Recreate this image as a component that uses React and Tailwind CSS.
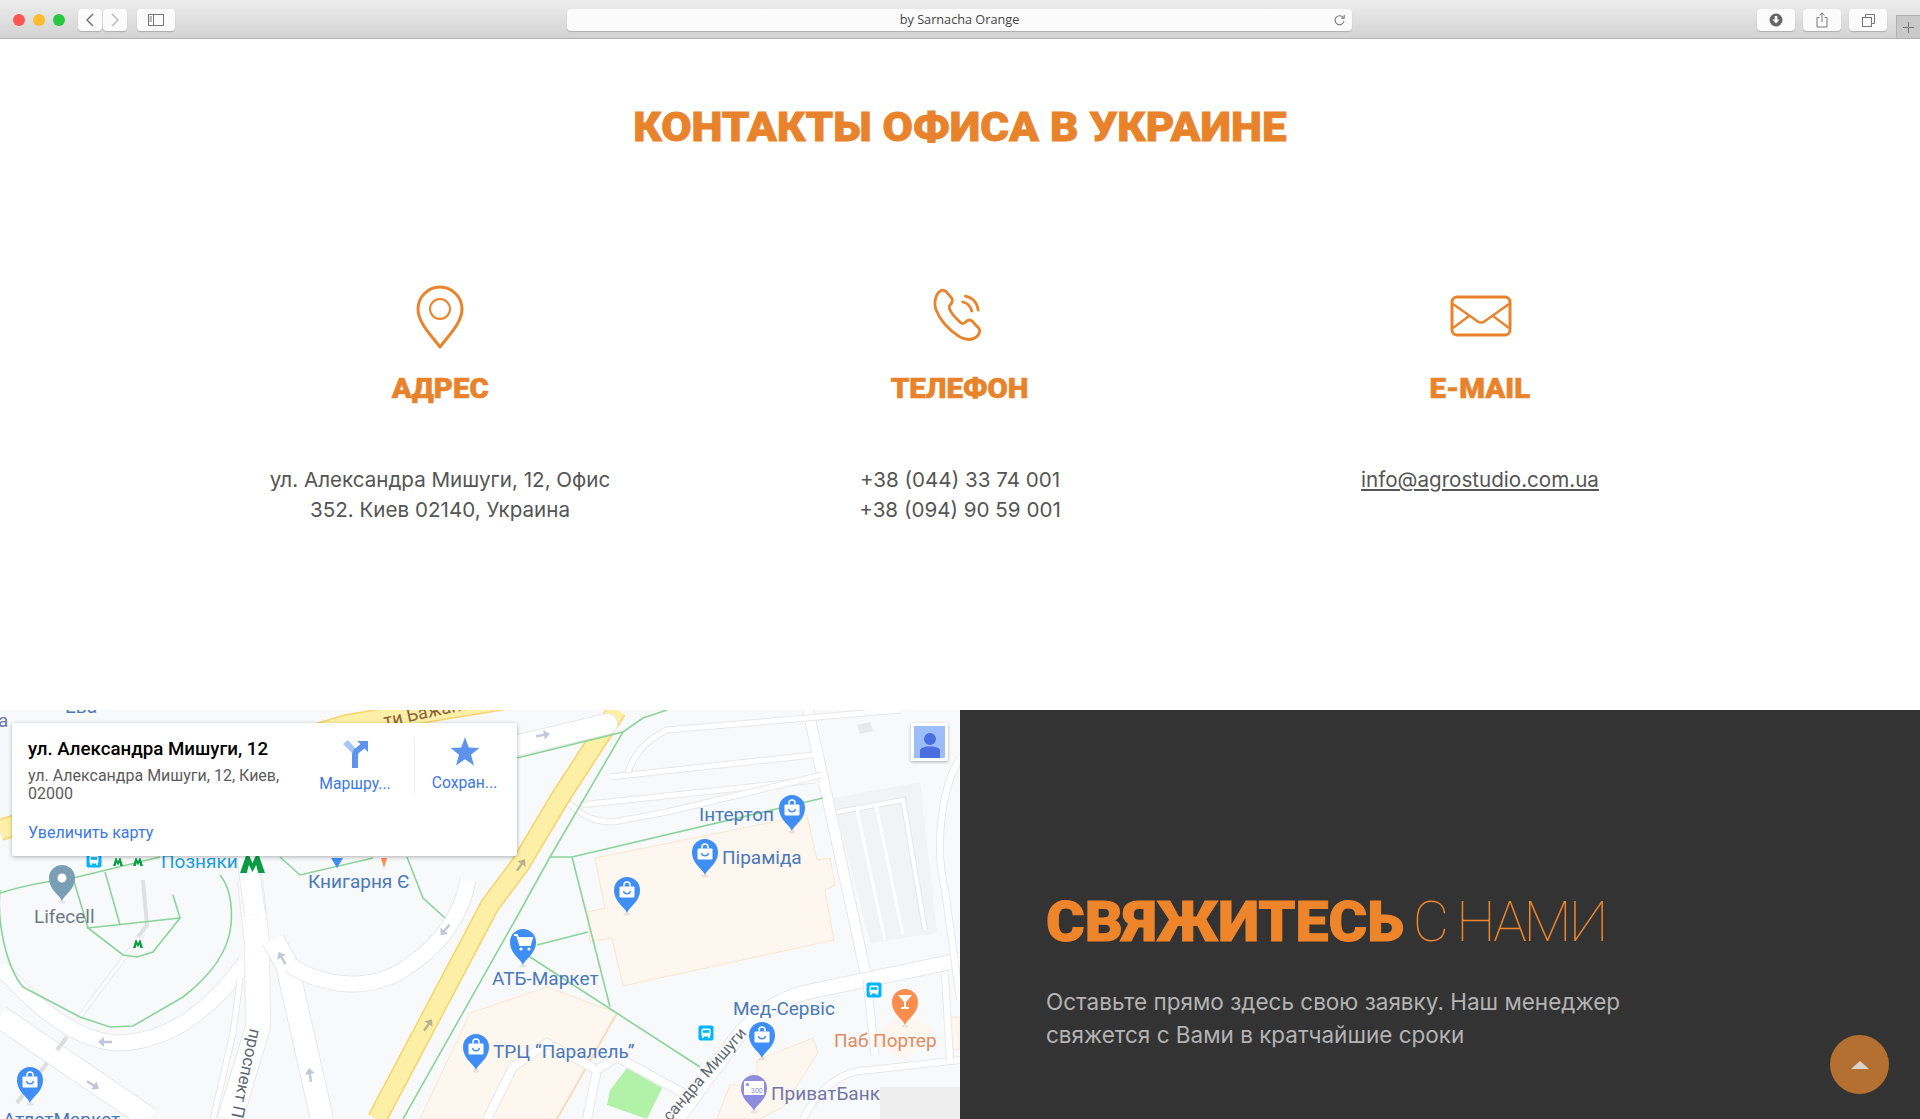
import React from 'react';

const ORANGE = '#e9832b';

const Road = ({ d, w = 14, cap = 'butt' }) => (
  <>
    <path d={d} fill="none" stroke="#e8e8e8" strokeWidth={w + 2} strokeLinejoin="round" strokeLinecap={cap} />
    <path d={d} fill="none" stroke="#ffffff" strokeWidth={w} strokeLinejoin="round" strokeLinecap={cap} />
  </>
);

const roads = [
  { d: 'M0 967 C30 1000 70 1040 117 1043 C170 1042 210 1010 245 963', w: 15 },
  { d: 'M250 880 L257 943 L258 1027 L230 1119', w: 24 },
  { d: 'M273 940 L287 965 L322 1119', w: 22 },
  { d: 'M290 965 C320 985 370 995 410 965 C440 945 462 915 468 880', w: 15 },
  { d: 'M0 1017 L150 1119', w: 22 },
  { d: 'M77 1020 L143 933', w: 3 },
  { d: 'M240 980 L233 1033 L213 1119', w: 5 },
  { d: 'M247 855 L255 915', w: 20 },
  { d: 'M808 710 L853 915 L867 980', w: 10 },
  { d: 'M960 960 L803 993 C770 1003 750 1020 735 1040 L677 1119', w: 14 },
  { d: 'M610 777 L813 755', w: 5 },
  { d: 'M580 805 L815 780', w: 5 },
  { d: 'M560 793 C575 812 590 822 613 822 L667 812 L822 775', w: 5 },
  { d: 'M628 772 C635 752 650 738 667 730 L900 710', w: 5 },
  { d: 'M960 758 C940 790 935 850 945 890 L960 1000', w: 6 },
  { d: 'M513 1067 L487 1119', w: 8 },
  { d: 'M513 1067 L547 1043 L597 1070 L587 1119', w: 8 },
  { d: 'M597 1070 L617 1057 L683 1093', w: 8 },
  { d: 'M803 1119 C820 1085 845 1070 870 1070 L960 1060', w: 6 },
  { d: 'M867 980 L875 1055', w: 7 },
  { d: 'M945 975 L950 1060', w: 6 },
];

const greens = [
  'M517 758 L623 732 L643 718 L667 710',
  'M623 732 L550 857 L518 915 L403 1119',
  'M550 857 L572 857 L823 798',
  'M572 857 L610 1007',
  'M537 945 L588 932',
  'M527 955 L700 1067',
  'M0 893 C25 885 45 882 73 878 L160 857',
  'M280 857 L300 875 L373 858',
  'M407 857 L423 898 L445 918',
  'M0 890 C-3 920 5 965 23 987 L80 1017 L110 1027 L133 1026 L183 997 C205 980 228 955 231 925 C233 900 228 885 220 875',
  'M88 928 L180 918 L153 952 L137 957 L123 955 Z',
  'M113 900 L120 925',
  'M173 895 L180 918',
  'M73 878 L88 928',
  'M105 872 L113 900',
];

const labels = [
  { t: 'Інтертоп', x: 699, y: 821, c: '#4a78b8' },
  { t: 'Піраміда', x: 722, y: 864, c: '#4a78b8' },
  { t: 'АТБ-Маркет', x: 492, y: 985, c: '#4a78b8' },
  { t: 'ТРЦ “Паралель”', x: 493, y: 1058, c: '#4a78b8' },
  { t: 'Мед-Сервіс', x: 733, y: 1015, c: '#4a78b8' },
  { t: 'Паб Портер', x: 834, y: 1047, c: '#e08a62' },
  { t: 'ПриватБанк', x: 771, y: 1100, c: '#7175a8' },
  { t: 'Книгарня Є', x: 308, y: 888, c: '#4a78b8' },
  { t: 'Позняки', x: 161, y: 868, c: '#1a9ddc' },
  { t: 'Lifecell', x: 34, y: 923, c: '#6f7a82' },
  { t: 'АтлетМаркет', x: 3, y: 1126, c: '#4a78b8' },
  { t: 'Ева', x: 65, y: 713, c: '#4a78b8' },
  { t: 'а', x: -2, y: 727, c: '#7175a8' },
];

const PinHead = ({ x, y, color, children }) => (
  <g transform={`translate(${x} ${y})`}>
    <ellipse cx="0" cy="24" rx="3.5" ry="1.5" fill="#000" opacity="0.08" />
    <path d="M0 23 C-2 17 -13 12 -13 0 A13 13 0 0 1 13 0 C13 12 2 17 0 23 Z" fill={color} />
    {children}
  </g>
);

const Bag = () => (
  <>
    <rect x="-7.5" y="-3.5" width="15" height="11" rx="1" fill="#fff" />
    <path d="M-3 -3.5 V-5 A3 3 0 0 1 3 -5 V-3.5" fill="none" stroke="#fff" strokeWidth="1.5" />
    <path d="M-3.5 1 A3.6 3.6 0 0 0 3.5 1" fill="none" stroke="#3f8ef5" strokeWidth="1.3" />
  </>
);

const Cart = () => (
  <>
    <path d="M-9 -7 H-6 L-3 3 H7 L9 -4 H-5" fill="none" stroke="#fff" strokeWidth="1.8" />
    <path d="M-4.5 -4 H8.5 L6.5 2.5 H-3 Z" fill="#fff" />
    <circle cx="-2" cy="7" r="1.6" fill="#fff" />
    <circle cx="6" cy="7" r="1.6" fill="#fff" />
  </>
);

const bagPins = [[792, 808], [705, 852], [627, 890], [476, 1047], [762, 1035], [30, 1080]];

const MapArrow = ({ x, y, r, c = '#c3c6da' }) => (
  <path
    transform={`translate(${x} ${y}) rotate(${r})`}
    d="M-1.2 7 V-1 H-5 L0 -7 L5 -1 H1.2 V7 Z"
    fill={c}
  />
);

const arrows = [
  [105, 1042, -90], [93, 1085, 122], [310, 1075, -8],
  [282, 958, -30], [445, 930, -140],
];

const Metro = ({ x, y, w, h }) => (
  <path
    transform={`translate(${x} ${y}) scale(${w / 24} ${h / 18})`}
    d="M0 18 L6 0 H8.5 L12 8 L15.5 0 H18 L24 18 H17.5 L15.5 10 L12 17 L8.5 10 L6.5 18 Z"
    fill="#0a9d45"
  />
);

const BusStop = ({ x, y }) => (
  <g transform={`translate(${x} ${y})`}>
    <rect x="-7.5" y="-7.5" width="15" height="15" rx="2" fill="#00b6ff" />
    <rect x="-4.5" y="-4.5" width="9" height="8" rx="1.5" fill="#fff" />
    <rect x="-3.2" y="-2.8" width="6.4" height="2.6" fill="#00b6ff" />
    <rect x="-4" y="3.4" width="2" height="1.5" fill="#fff" />
    <rect x="2" y="3.4" width="2" height="1.5" fill="#fff" />
  </g>
);

const MapDrawing = () => (
  <svg viewBox="0 710 960 409" className="absolute inset-0 w-full h-full bg-[#f8f9fb]" style={{ fontFamily: 'Roboto, sans-serif' }}>
    {/* parking + buildings */}
    <polygon points="833,798 920,782 937,933 870,943" fill="#f1f3f4" />
    <polygon points="857,725 870,722 873,731 860,734" fill="#e8eaea" />
    <polygon
      points="595,858 807,815 817,860 830,858 835,885 825,890 834,940 623,986 612,938 590,942 588,912 605,908"
      fill="#fef7ef"
      stroke="#fbe6cf"
    />
    <polygon points="470,1013 547,987 617,1013 557,1119 420,1119" fill="#fef7ef" stroke="#fbe6cf" />
    <path d="M617 1013 L557 1119" stroke="#f8dcbc" strokeWidth="2" fill="none" />
    <polygon points="757,1060 813,1038 818,1053 783,1107 760,1119 717,1119 730,1085 757,1085" fill="#fef7ef" stroke="#fbe6cf" />
    <polygon points="880,1030 905,1012 935,1030 905,1060 878,1045" fill="#fef7ef" />
    <polygon points="950,1017 960,1017 960,1050 950,1050" fill="#fef7ef" stroke="#fbe6cf" />
    <rect x="880" y="1087" width="80" height="32" fill="#eeeeee" />
    <polygon points="627,1068 662,1088 647,1119 607,1105 610,1090" fill="#b1f2a8" />

    {roads.map((r, i) => <Road key={i} {...r} />)}
    <path d="M837 812 L903 800 L925 930" fill="none" stroke="#e6e6e6" strokeWidth="6" />
    <path d="M837 812 L903 800 L925 930" fill="none" stroke="#fff" strokeWidth="4" />
    <path d="M857 810 L885 940 M876 805 L903 935" fill="none" stroke="#fff" strokeWidth="3" />
    <path d="M67 1037 L57 1050 M47 1063 L17 1103" stroke="#dcdede" strokeWidth="4" fill="none" />
    <path d="M143 880 L147 925 L138 937" stroke="#dfe0e0" strokeWidth="4" fill="none" />

    {/* yellow highways */}
    <path d="M377 1119 L490 905 L520 865 L560 798 L617 710" fill="none" stroke="#f8d26b" strokeWidth="20" />
    <path d="M377 1119 L490 905 L520 865 L560 798 L617 710" fill="none" stroke="#fdf0a6" strokeWidth="17" />
    <path d="M0 830 L347 725 L530 695" fill="none" stroke="#f8d26b" strokeWidth="22" />
    <path d="M0 830 L347 725 L530 695" fill="none" stroke="#fdf0a6" strokeWidth="19" />
    <text x="0" y="0" fontSize="18" fill="#8d5f3c" transform="translate(385 727) rotate(-12)">ти Бажана</text>
    <Road d="M430 766 L607 724" w={20} cap="round" />
    <MapArrow x={543} y={735} r={80} />

    {greens.map((d, i) => <path key={i} d={d} fill="none" stroke="#8ad49a" strokeWidth="1.6" />)}

    {arrows.map(([x, y, r], i) => <MapArrow key={i} x={x} y={y} r={r} />)}
    <MapArrow x={521} y={865} r={35} c="#b8b38e" />
    <MapArrow x={428} y={1025} r={35} c="#b8b38e" />

    <text x="0" y="0" fontSize="17" fill="#5d6a72" transform="translate(250 1028) rotate(102)">проспект П</text>
    <text x="0" y="0" fontSize="16" fill="#5d6a72" transform="translate(670 1122) rotate(-49)">сандра Мишуги</text>

    {bagPins.map(([x, y], i) => (
      <PinHead key={i} x={x} y={y} color="#3f8ef5"><Bag /></PinHead>
    ))}
    <PinHead x={523} y={942} color="#3f8ef5"><Cart /></PinHead>
    <PinHead x={754} y={1088} color="#8e8cdd">
      <rect x="-10" y="-7" width="20" height="14" rx="1" fill="#fff" />
      <circle cx="-6.5" cy="-3.5" r="1.6" fill="#8e8cdd" />
      <text x="-3" y="5" fontSize="7" fill="#8e8cdd">300</text>
    </PinHead>
    <PinHead x={905} y={1002} color="#fb8e4d">
      <path d="M-7 -7 H7 L1 0 V5 H4 V7 H-4 V5 H-1 V0 Z" fill="#fff" />
    </PinHead>
    <PinHead x={62} y={878} color="#7a9fb5">
      <circle cx="0" cy="0" r="4.5" fill="#fff" />
    </PinHead>

    <path d="M331 858 H343 L337 868 Z" fill="#3f8ef5" />
    <path d="M381 858 H387 L384 868 Z" fill="#fb8e4d" />

    <Metro x={240} y={855} w={25} h={18} />
    <Metro x={113} y={858} w={10} h={8} />
    <Metro x={133} y={858} w={10} h={8} />
    <Metro x={133} y={940} w={10} h={8} />

    <BusStop x={874} y={990} />
    <BusStop x={706} y={1033} />
    <BusStop x={94} y={860} />

    {labels.map((l) => (
      <text key={l.t} x={l.x} y={l.y} fontSize="19" fill={l.c}>{l.t}</text>
    ))}
  </svg>
);

const PlaceCard = () => (
  <div className="absolute left-3 top-[13px] w-[505px] h-[133px] bg-white rounded-[2px] shadow-[0_1px_4px_rgba(0,0,0,0.3)] pl-4 pt-[15px] flex font-['Roboto',sans-serif]">
    <div className="w-[272px] flex flex-col">
      <div className="text-[18.7px] leading-[22px] font-medium text-black whitespace-nowrap">ул. Александра Мишуги, 12</div>
      <div className="mt-[7px] text-[16px] leading-[18px] text-[#5b5b5b]">ул. Александра Мишуги, 12, Киев, 02000</div>
      <div className="mt-[21px] text-[16px] leading-[18px] text-[#3b78e7] whitespace-nowrap">Увеличить карту</div>
    </div>
    <div className="w-[110px] mr-[4px] flex flex-col items-center pt-[1px] text-[15.7px] text-[#3b78e7]">
      <svg width="30" height="30" viewBox="0 0 30 30">
        <path d="M3 5 L8 1 L17 11 V14 H12 Z" fill="#a6c6f7" />
        <path d="M12 29 V16 C12 12 14 10 17 8 L20.5 5 L17 2 H28 V13 L24.5 9.5 L20 13 C18.5 14.2 18 15 18 17 V29 Z" fill="#5c94ed" />
      </svg>
      <span className="mt-[6px] leading-[18px] whitespace-nowrap">Маршру...</span>
    </div>
    <div className="w-[100px] h-[55px] border-l border-[#eeeeee] flex flex-col items-center text-[15.7px] text-[#3b78e7]">
      <svg width="30" height="30" viewBox="0 0 24 24" className="mt-[-2px]">
        <path d="M12 1 L15 9.2 L23.5 9.6 L16.8 15 L19.2 23.5 L12 18.6 L4.8 23.5 L7.2 15 L0.5 9.6 L9 9.2 Z" fill="#5c94ed" />
      </svg>
      <span className="mt-[8px] leading-[18px] whitespace-nowrap">Сохран...</span>
    </div>
  </div>
);

const ToolbarButton = ({ className, children }) => (
  <div className={`h-[22px] bg-[#fbfbfb] rounded-[4px] shadow-[0_1px_1px_rgba(0,0,0,0.2)] flex items-center justify-center ${className}`}>
    {children}
  </div>
);

const BrowserBar = () => (
  <div className="h-[39px] pt-[2px] bg-gradient-to-b from-[#ededed] to-[#d3d3d3] border-b border-[#b1b1b1] flex items-center relative">
    <div className="flex gap-2 ml-[13px]">
      <span className="w-3 h-3 rounded-full bg-[#fc5753]" />
      <span className="w-3 h-3 rounded-full bg-[#fdbc2e]" />
      <span className="w-3 h-3 rounded-full bg-[#27c83f]" />
    </div>
    <div className="flex gap-px ml-[13px]">
      <ToolbarButton className="w-6">
        <svg width="10" height="14" viewBox="0 0 10 14"><path d="M8 1 L2 7 L8 13" fill="none" stroke="#777" strokeWidth="1.5" /></svg>
      </ToolbarButton>
      <ToolbarButton className="w-6">
        <svg width="10" height="14" viewBox="0 0 10 14"><path d="M2 1 L8 7 L2 13" fill="none" stroke="#bbb" strokeWidth="1.5" /></svg>
      </ToolbarButton>
    </div>
    <ToolbarButton className="w-[38px] ml-[10px]">
      <svg width="16" height="12" viewBox="0 0 16 12">
        <rect x="0.5" y="0.5" width="15" height="11" fill="none" stroke="#777" />
        <path d="M5.5 0.5 V11.5" stroke="#777" />
        <path d="M1.5 3 H4 M1.5 5 H4 M1.5 7 H4" stroke="#777" />
      </svg>
    </ToolbarButton>
    <ToolbarButton className="w-[785px] ml-[392px] relative">
      <span className="text-[12.7px] text-[#444] font-['Open_Sans',sans-serif]">by Sarnacha Orange</span>
      <svg className="absolute right-[6px] top-[5px]" width="13" height="13" viewBox="0 0 13 13">
        <path d="M10.5 4 A4.5 4.5 0 1 0 11 7" fill="none" stroke="#777" strokeWidth="1.1" />
        <path d="M8 4.3 H11.2 V1" fill="none" stroke="#777" strokeWidth="1.1" />
      </svg>
    </ToolbarButton>
    <ToolbarButton className="w-[38px] ml-[405px]">
      <svg width="14" height="14" viewBox="0 0 14 14">
        <circle cx="7" cy="7" r="6.5" fill="#666" />
        <path d="M5.7 3 H8.3 V6.5 H10.5 L7 10.5 L3.5 6.5 H5.7 Z" fill="#fff" />
      </svg>
    </ToolbarButton>
    <ToolbarButton className="w-[38px] ml-2">
      <svg width="12" height="16" viewBox="0 0 12 16">
        <path d="M3.5 5.5 H1 V15 H11 V5.5 H8.5" fill="none" stroke="#777" />
        <path d="M6 10 V1 M3.5 3.2 L6 0.8 L8.5 3.2" fill="none" stroke="#777" />
      </svg>
    </ToolbarButton>
    <ToolbarButton className="w-[38px] ml-2">
      <svg width="13" height="13" viewBox="0 0 13 13">
        <rect x="0.5" y="3.5" width="9" height="9" fill="none" stroke="#777" />
        <path d="M3.5 3.5 V0.5 H12.5 V9.5 H9.5" fill="none" stroke="#777" />
      </svg>
    </ToolbarButton>
    <div className="absolute right-0 bottom-0 w-6 h-[23px] bg-[#c9c9c9] border-l border-t border-[#b1b1b1] flex items-center justify-center">
      <svg width="11" height="11" viewBox="0 0 11 11"><path d="M5.5 0 V11 M0 5.5 H11" stroke="#777" /></svg>
    </div>
  </div>
);

const PinIcon = () => (
  <svg width="50" height="64" viewBox="0 0 50 64" fill="none" stroke={ORANGE}>
    <path d="M25 62 C17 51 3 38 3 24 A22 22 0 0 1 47 24 C47 38 33 51 25 62 Z" strokeWidth="3" strokeLinejoin="round" />
    <circle cx="25" cy="24" r="10" strokeWidth="2" />
  </svg>
);

const PhoneIcon = () => (
  <svg width="60" height="60" viewBox="0 0 56 56" fill="none" stroke={ORANGE} strokeWidth="2.6" strokeLinejoin="round" strokeLinecap="round">
    <path d="M11 3 C14 2.5 15 4 16.5 6 L20 10 C21.5 12 21 14.5 18.5 17 C17 18.5 18 20 19.5 23 C22 27.5 25 30 29 33.5 C31 35 32 34 33.5 32.5 C35.5 30.5 37.5 30 39.5 32 L45.5 38.5 C47 40.5 46.5 43 44 46 C40 50 33 50 27 46 C17 39.5 9 30 5.5 21 C3 13 6 5 11 3 Z" />
    <path d="M33 8.5 C39.5 9.5 44 14.5 45 21.5" />
    <path d="M30.5 14 C35 15 38 18 39 22.5" />
  </svg>
);

const MailIcon = () => (
  <svg width="62" height="42" viewBox="0 0 62 42" fill="none" stroke={ORANGE} strokeWidth="3" strokeLinejoin="round" className="mb-[3px] ml-[2px]">
    <rect x="2" y="2" width="58" height="38" rx="5" />
    <path d="M3 9 L27 26 C29.5 28 32.5 28 35 26 L59 9" strokeWidth="2.4" />
    <path d="M3 33 L19 21 M59 33 L43 21" strokeWidth="2.2" />
  </svg>
);

const contacts = [
  { icon: <PinIcon />, title: 'АДРЕС', lines: ['ул. Александра Мишуги, 12, Офис', '352. Киев 02140, Украина'] },
  { icon: <PhoneIcon />, title: 'ТЕЛЕФОН', lines: ['+38 (044) 33 74 001', '+38 (094) 90 59 001'] },
  { icon: <MailIcon />, title: 'E-MAIL', link: 'info@agrostudio.com.ua' },
];

export default function App() {
  return (
    <div className="relative w-[1920px] h-[1119px] overflow-hidden bg-white font-['Inter',sans-serif]">
      <BrowserBar />

      <section className="h-[671px] pt-[67px] text-center">
        <h2 className="inline-block scale-x-[1.1] text-[40px] leading-[44px] font-black text-[#e9832b] font-['Roboto',sans-serif] [-webkit-text-stroke:0.8px_#e9832b]">
          КОНТАКТЫ ОФИСА В УКРАИНЕ
        </h2>
        <div className="mt-[135px] mx-[180px] grid grid-cols-3">
          {contacts.map((c) => (
            <div key={c.title} className="flex flex-col items-center text-center">
              <div className="h-[64px] flex items-center justify-center">{c.icon}</div>
              <h3 className="mt-[23px] scale-x-[1.05] text-[28px] leading-[34px] font-black text-[#e9832b] font-['Roboto',sans-serif] [-webkit-text-stroke:0.6px_#e9832b]">{c.title}</h3>
              <div className="mt-[59px] text-[20.6px] leading-[30px] text-[#555555]">
                {c.lines && c.lines.map((l) => <div key={l}>{l}</div>)}
                {c.link && <a className="underline">{c.link}</a>}
              </div>
            </div>
          ))}
        </div>
      </section>

      <section className="grid grid-cols-2 h-[409px]">
        <div className="relative overflow-hidden">
          <MapDrawing />
          <PlaceCard />
          <div className="absolute left-[911px] top-[13px] w-[37px] h-[38px] bg-[#9dbdf9] border-[3px] border-white shadow-[0_1px_3px_rgba(0,0,0,0.3)] flex items-end justify-center overflow-hidden">
            <svg width="24" height="28" viewBox="0 0 24 28">
              <circle cx="12" cy="9" r="6" fill="#4a6ee0" />
              <path d="M2 28 V21 C2 18 5 16.5 12 16.5 C19 16.5 22 18 22 21 V28 Z" fill="#4a6ee0" />
            </svg>
          </div>
        </div>
        <div className="bg-[#333333] pl-[86px] pt-[182px]">
          <h2 className="text-[56px] leading-[60px] text-[#ee852b] font-['Roboto',sans-serif] whitespace-nowrap">
            <span className="inline-block origin-left scale-x-[1.054] mr-[27px] font-black [-webkit-text-stroke:1px_#ee852b]">СВЯЖИТЕСЬ</span>
            <span className="font-thin tracking-[-3px]">С НАМИ</span>
          </h2>
          <p className="mt-[33px] text-[22.5px] leading-[33px] text-[#b3b3b3]">
            Оставьте прямо здесь свою заявку. Наш менеджер<br />свяжется с Вами в кратчайшие сроки
          </p>
        </div>
      </section>

      <button className="absolute left-[1830px] top-[1035px] w-[59px] h-[59px] rounded-full bg-[#b37030] flex items-center justify-center">
        <span className="w-0 h-0 border-l-[9px] border-r-[9px] border-b-[8px] border-l-transparent border-r-transparent border-b-[#d9d4cd]" />
      </button>
    </div>
  );
}
